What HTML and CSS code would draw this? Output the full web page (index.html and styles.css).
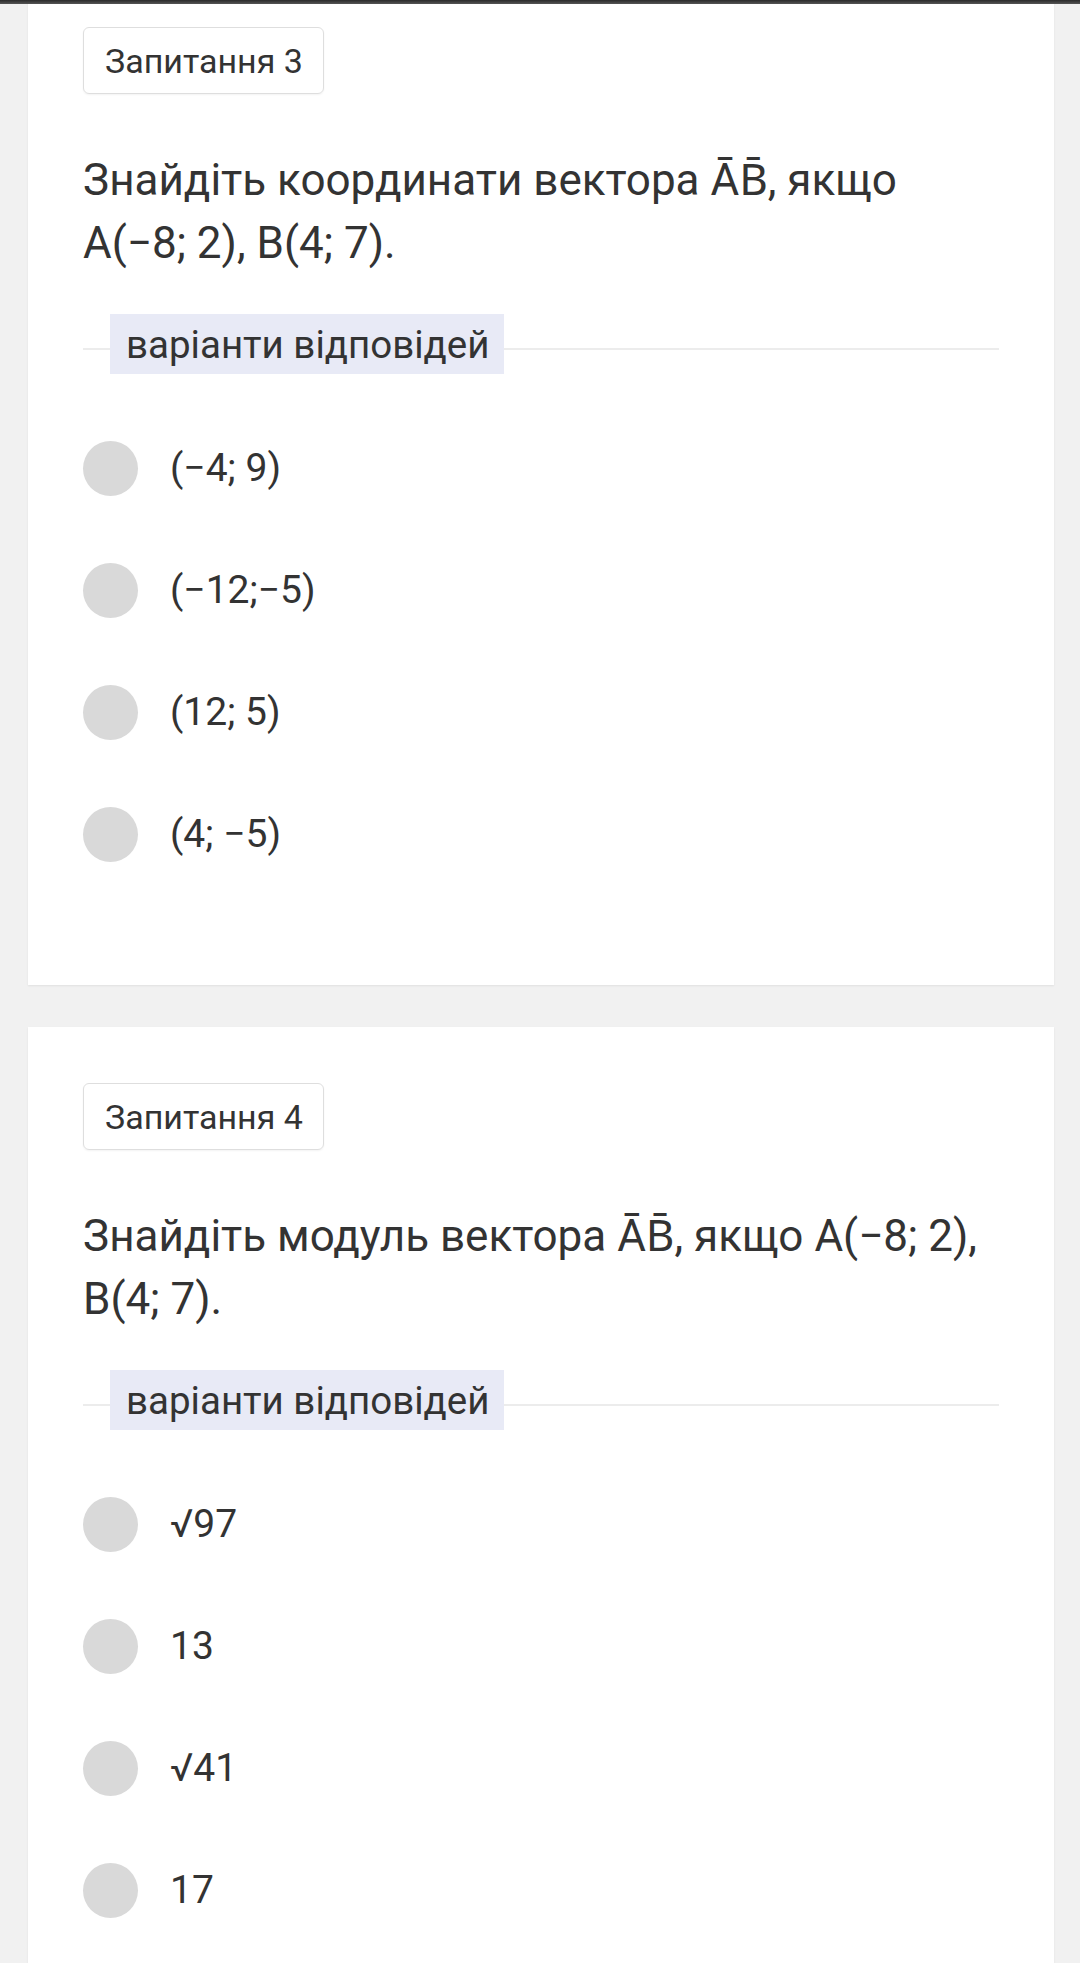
FILE: index.html
```html
<!DOCTYPE html>
<html lang="uk">
<head>
<meta charset="utf-8">
<title>Тест</title>
<link rel="stylesheet" href="styles.css">
</head>
<body>
<div class="topbar"></div>
<main class="feed">
  <section class="card">
    <div class="badge">Запитання 3</div>
    <p class="question">Знайдіть координати вектора ĀB̄, якщо А(−8; 2), В(4; 7).</p>
    <div class="sep"><span class="label">варіанти відповідей</span></div>
    <ul class="options">
      <li class="opt"><span class="radio"></span><span class="opt-text">(−4; 9)</span></li>
      <li class="opt"><span class="radio"></span><span class="opt-text">(−12;−5)</span></li>
      <li class="opt"><span class="radio"></span><span class="opt-text">(12; 5)</span></li>
      <li class="opt"><span class="radio"></span><span class="opt-text">(4; −5)</span></li>
    </ul>
  </section>
  <section class="card">
    <div class="badge">Запитання 4</div>
    <p class="question">Знайдіть модуль вектора ĀB̄, якщо А(−8; 2), В(4; 7).</p>
    <div class="sep"><span class="label">варіанти відповідей</span></div>
    <ul class="options">
      <li class="opt"><span class="radio"></span><span class="opt-text">√97</span></li>
      <li class="opt"><span class="radio"></span><span class="opt-text">13</span></li>
      <li class="opt"><span class="radio"></span><span class="opt-text">√41</span></li>
      <li class="opt"><span class="radio"></span><span class="opt-text">17</span></li>
    </ul>
  </section>
</main>
</body>
</html>
```
FILE: styles.css
```css
html, body {
  margin: 0;
  padding: 0;
}
body {
  background: #f1f1f1;
  font-family: Roboto, "Noto Sans", "Liberation Sans", sans-serif;
  color: #333333;
  overflow: hidden;
}
.topbar {
  position: fixed;
  top: 0;
  left: 0;
  right: 0;
  height: 4px;
  background: linear-gradient(#2a2a2a, #555555);
  z-index: 5;
}
.feed {
  margin: -29px 26px 0 28px;
  display: flex;
  flex-direction: column;
  gap: 42px;
}
.card {
  background: #ffffff;
  padding: 56px 55px 90px 55px;
  box-shadow: 0 1px 2px rgba(0, 0, 0, 0.07);
}
.badge {
  display: inline-flex;
  align-items: center;
  height: 65px;
  padding: 0 20px 0 21px;
  border: 1px solid #dedede;
  border-radius: 6px;
  font-size: 34px;
  color: #333333;
  box-shadow: 0 1px 2px rgba(0, 0, 0, 0.05);
}
.question {
  margin: 55px 0 0 0;
  font-size: 44px;
  line-height: 63px;
  color: #333333;
}
.sep {
  display: flex;
  align-items: flex-start;
  margin-top: 39px;
  height: 60px;
}
.sep::before,
.sep::after {
  content: "";
  display: block;
  height: 2px;
  background: #ececec;
  margin-top: 34px;
}
.sep::before {
  width: 27px;
}
.sep::after {
  flex: 1;
}
.label {
  display: flex;
  align-items: center;
  height: 60px;
  padding: 0 15px 0 16px;
  background: #e8eaf6;
  font-size: 38.5px;
  color: #333333;
}
.options {
  list-style: none;
  margin: 33px 0 0 0;
  padding: 0;
}
.opt {
  display: flex;
  align-items: center;
  height: 122px;
}
.radio {
  width: 55px;
  height: 55px;
  border-radius: 50%;
  background: #d9d9d9;
  flex: none;
}
.opt-text {
  margin-left: 32px;
  font-size: 39px;
  color: #333333;
}
```
